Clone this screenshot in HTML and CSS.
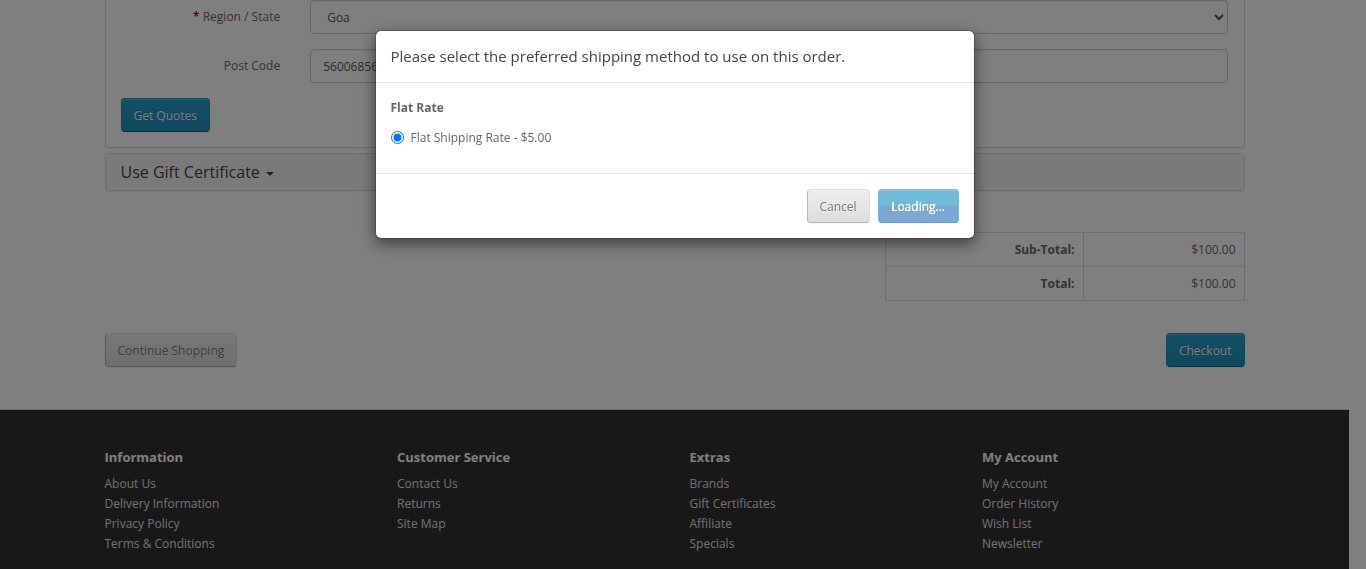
FILE: index.html
```html
<!DOCTYPE html>
<html lang="en">
<head>
<meta charset="utf-8">
<title>Shopping Cart</title>
<link rel="stylesheet" href="styles.css">
</head>
<body class="modal-open">
<div class="container">
  <div class="panel panel-cut">
    <div class="panel-body">
      <form class="form-horizontal">
        <div class="form-group required">
          <label class="control-label">Region / State</label>
          <div class="field">
            <select class="form-control">
              <option>Goa</option>
            </select>
          </div>
        </div>
        <div class="form-group">
          <label class="control-label">Post Code</label>
          <div class="field">
            <input class="form-control" type="text" value="56006856">
          </div>
        </div>
        <button type="button" class="btn btn-primary">Get Quotes</button>
      </form>
    </div>
  </div>
  <div class="panel">
    <div class="panel-heading">
      <h4 class="panel-title">Use Gift Certificate <span class="caret"></span></h4>
    </div>
  </div>
  <div class="spacer"></div>
  <div class="totals-row">
    <table class="totals">
      <tr><td class="lbl"><strong>Sub-Total:</strong></td><td class="amt">$100.00</td></tr>
      <tr><td class="lbl"><strong>Total:</strong></td><td class="amt">$100.00</td></tr>
    </table>
  </div>
  <div class="buttons">
    <a class="btn btn-default">Continue Shopping</a>
    <a class="btn btn-primary">Checkout</a>
  </div>
</div>

<footer class="footer">
  <div class="container footer-cols">
    <div class="fcol">
      <h5>Information</h5>
      <ul>
        <li>About Us</li>
        <li>Delivery Information</li>
        <li>Privacy Policy</li>
        <li>Terms &amp; Conditions</li>
      </ul>
    </div>
    <div class="fcol">
      <h5>Customer Service</h5>
      <ul>
        <li>Contact Us</li>
        <li>Returns</li>
        <li>Site Map</li>
      </ul>
    </div>
    <div class="fcol">
      <h5>Extras</h5>
      <ul>
        <li>Brands</li>
        <li>Gift Certificates</li>
        <li>Affiliate</li>
        <li>Specials</li>
      </ul>
    </div>
    <div class="fcol">
      <h5>My Account</h5>
      <ul>
        <li>My Account</li>
        <li>Order History</li>
        <li>Wish List</li>
        <li>Newsletter</li>
      </ul>
    </div>
  </div>
</footer>

<div class="modal-backdrop"></div>
<div class="modal">
  <div class="modal-dialog">
    <div class="modal-content">
      <div class="modal-header">
        <h4 class="modal-title">Please select the preferred shipping method to use on this order.</h4>
      </div>
      <div class="modal-body">
        <p class="method-title"><strong>Flat Rate</strong></p>
        <div class="radio">
          <label><input type="radio" name="shipping" checked> Flat Shipping Rate - $5.00</label>
        </div>
      </div>
      <div class="modal-footer">
        <button type="button" class="btn btn-default">Cancel</button>
        <button type="button" class="btn btn-primary btn-loading" disabled>Loading...</button>
      </div>
    </div>
  </div>
</div>
</body>
</html>
```

FILE: styles.css
```css
* { box-sizing: border-box; }

html, body {
  overflow: hidden;
  height: 100%;
}

body {
  margin: 0;
  padding-right: 17px;
  background: #fff;
  font-family: "Open Sans", "Liberation Sans", sans-serif;
  font-size: 12px;
  line-height: 20px;
  color: #666;
}

.container {
  width: 1170px;
  margin: 0 auto;
  padding: 0 15px;
}

/* panels */
.panel {
  border: 1px solid #ddd;
  border-radius: 4px;
  background: #fff;
  box-shadow: 0 1px 1px rgba(0,0,0,.05);
  margin-bottom: 5px;
}
.panel-cut {
  border-top: none;
  border-top-left-radius: 0;
  border-top-right-radius: 0;
}
.panel-cut .panel-body { padding-top: 0; }
.panel-body { padding: 15px; }

.panel-heading {
  background: #f5f5f5;
  padding: 10px 15px;
  border-radius: 3px;
}
.panel-title {
  margin: 0;
  font-size: 16px;
  font-weight: 400;
  line-height: 16px;
  color: #444;
}
.caret {
  display: inline-block;
  width: 0;
  height: 0;
  margin-left: 2px;
  vertical-align: middle;
  border-top: 4px solid #444;
  border-left: 4px solid transparent;
  border-right: 4px solid transparent;
}

/* form */
.form-group {
  display: flex;
  margin: 0 -15px 15px;
}
.control-label {
  width: 16.6667%;
  padding: 7px 15px 0;
  text-align: right;
  font-weight: 400;
}
.required .control-label::before {
  content: "* ";
  color: #f00;
  font-weight: bold;
}
.field {
  width: 83.3333%;
  padding: 0 15px;
}
.form-control {
  display: block;
  width: 100%;
  height: 34px;
  padding: 6px 12px;
  font-family: inherit;
  font-size: 12px;
  line-height: 1.42857;
  color: #555;
  background: #fff;
  border: 1px solid #ccc;
  border-radius: 4px;
  box-shadow: inset 0 1px 1px rgba(0,0,0,.075);
}

/* buttons */
.btn {
  display: inline-block;
  padding: 8px 12px 6px;
  font-family: inherit;
  font-size: 12px;
  line-height: 18px;
  border: 1px solid #ccc;
  border-radius: 4px;
  cursor: pointer;
  box-shadow: inset 0 1px 0 rgba(255,255,255,.2), 0 1px 2px rgba(0,0,0,.05);
}
.btn-primary {
  color: #fff;
  text-shadow: 0 -1px 0 rgba(0,0,0,.25);
  background-color: #229ac8;
  background-image: linear-gradient(to bottom, #23a1d1, #1f90bb);
  border-color: #1f90bb #1f90bb #145e7a;
}
.btn-default {
  color: #777;
  text-shadow: 0 1px 0 rgba(255,255,255,.5);
  background-color: #e7e7e7;
  background-image: linear-gradient(to bottom, #eeeeee, #dddddd);
  border-color: #ddd #ddd #b3b3b3 #b7b7b7;
}
.btn-loading {
  padding-left: 12.5px;
  padding-right: 12.5px;
  background-image: linear-gradient(to bottom, #6dbcdb 0, #6fbad9 48%, #7aa8d0 52%, #7aa8d0 100%);
  border-color: #7ab5d6 #7ab5d6 #6f99c0;
  text-shadow: 0 0 0.3px #fff;
  cursor: default;
}

.spacer { height: 20px; margin-top: 21px; }

/* totals */
.totals-row {
  display: flex;
  justify-content: flex-end;
}
.totals {
  width: 360px;
  border-collapse: collapse;
  margin-bottom: 20px;
}
.totals td {
  border: 1px solid #ddd;
  padding: 7px 8px;
  text-align: right;
  line-height: 19px;
}
.totals .lbl { width: 198px; }

.buttons {
  display: flex;
  justify-content: space-between;
  margin: 12px 0;
}

/* footer */
.footer {
  margin-top: 42px;
  padding-top: 30px;
  padding-bottom: 40px;
  background: #303030;
  border-top: 1px solid #ddd;
  color: #e2e2e2;
}
.footer-cols {
  display: grid;
  grid-template-columns: repeat(4, 1fr);
  padding: 0;
}
.fcol { padding: 0 15px; }
.fcol h5 {
  margin: 10px 0;
  font-size: 13px;
  font-weight: 700;
  line-height: 14px;
  color: #fff;
}
.fcol ul {
  list-style: none;
  margin: 0;
  padding: 0;
}
.fcol li { line-height: 20px; }

/* modal */
.modal-backdrop {
  position: fixed;
  inset: 0;
  background: rgba(0,0,0,.5);
  z-index: 1040;
}
.modal {
  position: fixed;
  top: 0;
  left: 0;
  right: 17px;
  bottom: 0;
  z-index: 1050;
}
.modal-dialog {
  width: 600px;
  margin: 30px auto;
}
.modal-content {
  background: #fff;
  border: 1px solid rgba(0,0,0,.2);
  border-radius: 6px;
  box-shadow: 0 5px 15px rgba(0,0,0,.5);
  background-clip: padding-box;
}
.modal-header {
  padding: 15px;
  border-bottom: 1px solid #e5e5e5;
}
.modal-title {
  margin: 0;
  font-size: 15px;
  font-weight: 400;
  line-height: 21px;
  color: #444;
}
.modal-body { padding: 15px; }
.method-title { margin: 0 0 10px; }
.radio { margin: 10px 0; }
.radio label {
  display: block;
  padding-left: 20px;
  position: relative;
}
.radio input {
  position: absolute;
  left: 0;
  top: 3px;
  margin: 0;
  width: 13px;
  height: 13px;
}
.modal-footer {
  padding: 15px;
  border-top: 1px solid #e5e5e5;
  display: flex;
  justify-content: flex-end;
  gap: 8px;
}
```
